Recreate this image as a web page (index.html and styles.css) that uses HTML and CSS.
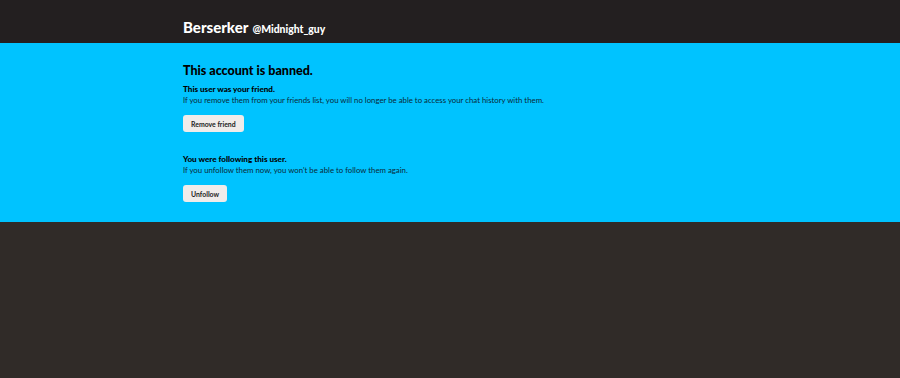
FILE: index.html
```html
<!DOCTYPE html>
<html lang="en">
<head>
    <meta charset="UTF-8">
    <title>Banned account</title>
    <link rel="stylesheet" href="styles.css">
</head>
<body>
    <div class="profile-header">
        <div class="wrap">
            <span class="display-name">Berserker</span>
            <span class="username">@Midnight_guy</span>
        </div>
    </div>
    <div class="banned-panel">
        <div class="wrap">
            <h2>This account is banned.</h2>
            <div class="section">
                <h4>This user was your friend.</h4>
                <p>If you remove them from your friends list, you will no longer be able to access your chat history with them.</p>
                <button>Remove friend</button>
            </div>
            <div class="section">
                <h4>You were following this user.</h4>
                <p>If you unfollow them now, you won't be able to follow them again.</p>
                <button>Unfollow</button>
            </div>
        </div>
    </div>
</body>
</html>
```

FILE: styles.css
```css
body {
    margin: 0;
    background-color: #302b28;
    font-family: Lato, 'Liberation Sans', sans-serif;
    color: #000;
}
.wrap {
    width: 534px;
    margin: 0 auto;
}
.profile-header {
    background-color: #231f20;
    height: 43px;
    box-sizing: border-box;
    padding-top: 18px;
}
.profile-header .wrap {
    display: flex;
    align-items: baseline;
}
.display-name {
    color: #fff;
    font-weight: 900;
    font-size: 15px;
    line-height: 18px;
    margin-right: 4px;
}
.username {
    color: #fff;
    font-weight: 900;
    font-size: 10.4px;
}
.banned-panel {
    background-color: #00c3ff;
    padding: 63px 0 20px;
    padding-top: 20px;
}
h2 {
    font-size: 12.5px;
    font-weight: 900;
    margin: 0 0 5px;
    line-height: 16px;
}
h4 {
    font-size: 8.1px;
    font-weight: 900;
    margin: 0;
    line-height: 11px;
}
p {
    font-size: 7.8px;
    margin: 0 0 9px;
    line-height: 11px;
    color: #0b2a38;
}
.section + .section {
    margin-top: 22px;
}
button {
    display: block;
    font-family: inherit;
    font-weight: bold;
    font-size: 6.9px;
    background-color: #f0ecea;
    border: none;
    border-radius: 3px;
    height: 17px;
    padding: 0 8px;
    color: #222;
}
```
